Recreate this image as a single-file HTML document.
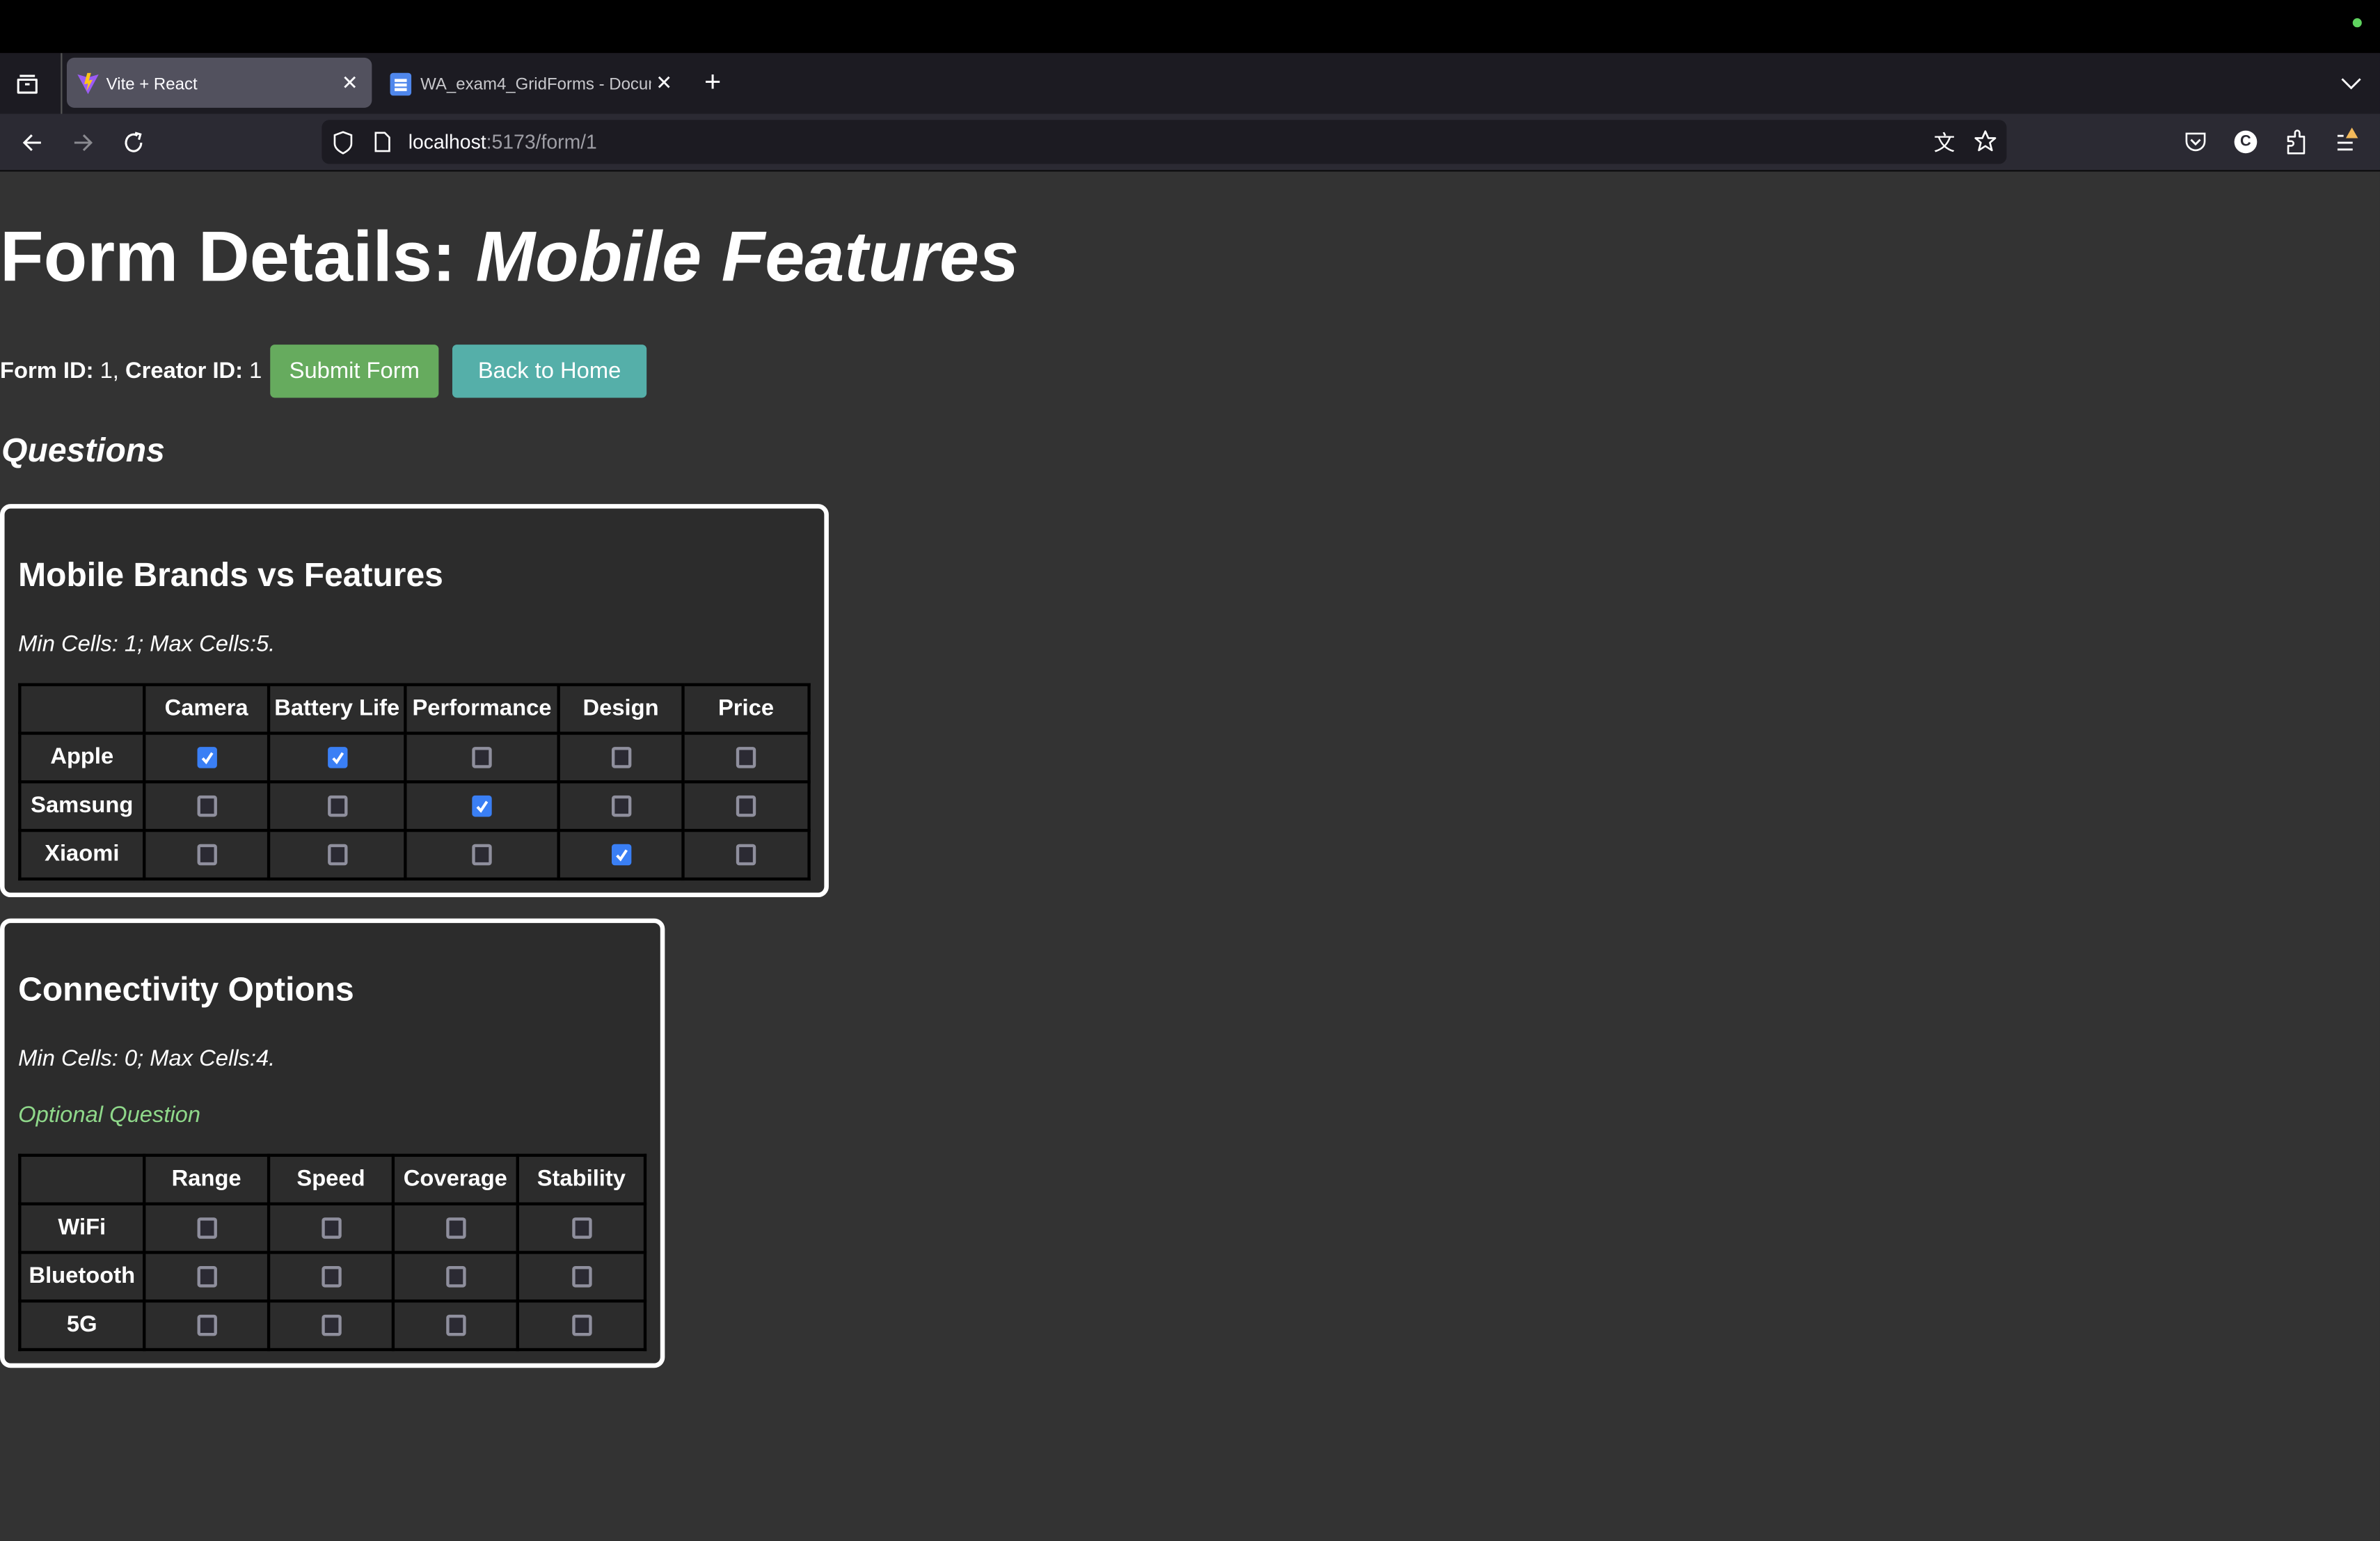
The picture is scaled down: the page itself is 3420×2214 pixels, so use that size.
<!DOCTYPE html>
<html><head><meta charset="utf-8">
<style>
html,body{margin:0;padding:0;width:3420px;height:2214px;overflow:hidden;background:#333;}
#w{position:absolute;left:0;top:0;width:1568px;height:1015px;transform:scale(2.18112);transform-origin:0 0;font-family:"Liberation Sans",Arial,sans-serif;color:#fff;background:#333;}
.a{position:absolute;}
.cb{display:inline-block;width:9px;height:10px;border:2px solid #8f8f9d;border-radius:2px;background:#2b2a33;vertical-align:middle;}
.ck{display:inline-block;width:13px;height:14px;border-radius:2px;background:#3a7ff5;vertical-align:middle;position:relative;}
.ck svg{position:absolute;left:0;top:0}
table{border-collapse:collapse;position:absolute;}
td,th{border:2px solid #000;font-weight:bold;font-size:15px;text-align:center;padding:0;height:30px;line-height:28px;}
.card{position:absolute;left:0;border:3px solid #fff;border-radius:7px;background:#2c2c2c;box-sizing:border-box;}
.card h2{position:absolute;left:9px;margin:0;font-size:22px;font-weight:bold;}
.card .m{position:absolute;left:9px;font-style:italic;font-size:15px;}
</style></head><body><div id="w">
<div class="a" style="left:0;top:0;width:1568px;height:35px;background:#000"></div>
<div class="a" style="left:1550px;top:12px;width:6px;height:6px;border-radius:3px;background:#5fd35f"></div>
<div class="a" style="left:0;top:35px;width:1568px;height:40px;background:#1c1b22"></div>
<div class="a" style="left:40px;top:35px;width:1px;height:40px;background:#555"></div>
<svg class="a" style="left:10px;top:47px" width="16" height="16" viewBox="0 0 16 16"><path d="M3 3h10M2 5.5h12v8.5H2z" fill="none" stroke="#fff" stroke-width="1.4" stroke-linejoin="round"/><path d="M6.5 8.5h3" stroke="#fff" stroke-width="1.4"/></svg>
<div class="a" style="left:44px;top:38px;width:201px;height:33px;background:#52515e;border-radius:5px"></div>
<svg class="a" style="left:51px;top:48px" width="14" height="14" viewBox="0 0 14 14"><path d="M0 1L7 14L14 1L7 3Z" fill="#9b5cf5"/><path d="M6.5 0L4.5 7.5L7 7L6 12L10 4.5L7.5 5L9 0Z" fill="#ffc517"/></svg>
<div class="a" style="left:70px;top:50px;font-size:11px;color:#fbfbfe">Vite + React</div>
<div class="a" style="left:225px;top:47px;font-size:13px;color:#fbfbfe">✕</div>
<div class="a" style="left:257px;top:48px;width:14px;height:15px;background:#4f87ec;border-radius:2px"></div>
<div class="a" style="left:260px;top:52px;width:8px;height:1.5px;background:#fff;box-shadow:0 3px 0 #fff,0 6px 0 #fff"></div>
<div class="a" style="left:277px;top:50px;font-size:11px;color:#c8c8cc;width:152px;overflow:hidden;white-space:nowrap">WA_exam4_GridForms - Document</div>
<div class="a" style="left:432px;top:47px;font-size:13px;color:#fbfbfe">✕</div>
<div class="a" style="left:464px;top:44px;font-size:19px;color:#fbfbfe;font-weight:300">+</div>
<svg class="a" style="left:1542px;top:50px" width="14" height="10" viewBox="0 0 14 10"><path d="M1 2L7 8L13 2" fill="none" stroke="#fff" stroke-width="1.3"/></svg>
<div class="a" style="left:0;top:75px;width:1568px;height:37px;background:#2b2a33"></div>
<div class="a" style="left:0;top:112px;width:1568px;height:1px;background:#0c0c0d"></div>
<svg class="a" style="left:13px;top:86px" width="16" height="16" viewBox="0 0 16 16"><path d="M14 8H3M8 3L3 8L8 13" fill="none" stroke="#fff" stroke-width="1.4"/></svg>
<svg class="a" style="left:47px;top:86px" width="16" height="16" viewBox="0 0 16 16"><path d="M2 8H13M8 3L13 8L8 13" fill="none" stroke="#8a8a90" stroke-width="1.4"/></svg>
<svg class="a" style="left:80px;top:86px" width="16" height="16" viewBox="0 0 16 16"><path d="M13 8A5 5.5 0 1 1 10.5 3.3" fill="none" stroke="#fff" stroke-width="1.4"/><path d="M9 1.5L12.5 2.5L11.5 6" fill="none" stroke="#fff" stroke-width="1.4"/></svg>
<div class="a" style="left:212px;top:79px;width:1110px;height:29px;background:#1c1b22;border-radius:5px"></div>
<svg class="a" style="left:219px;top:86px" width="14" height="16" viewBox="0 0 14 16"><path d="M7 1L12.5 3V8.5C12.5 11.5 10 13.5 7 15C4 13.5 1.5 11.5 1.5 8.5V3Z" fill="none" stroke="#fff" stroke-width="1.2"/></svg>
<svg class="a" style="left:246px;top:86px" width="12" height="15" viewBox="0 0 12 15"><path d="M1.5 1.5h6l3 3v9h-9z" fill="none" stroke="#fff" stroke-width="1.2"/></svg>
<div class="a" style="left:269px;top:86px;font-size:13px;color:#fbfbfe">localhost<span style="color:#9f9fa6">:5173/form/1</span></div>
<div class="a" style="left:1274px;top:84px;font-size:14px;color:#fff">文</div>
<svg class="a" style="left:1300px;top:85px" width="16" height="16" viewBox="0 0 16 16"><path d="M8 1.5L10 6H14.5L11 9L12.3 14L8 11.2L3.7 14L5 9L1.5 6H6Z" fill="none" stroke="#fff" stroke-width="1.2" stroke-linejoin="round"/></svg>
<svg class="a" style="left:1439px;top:86px" width="15" height="15" viewBox="0 0 15 15"><path d="M1.5 2h12v5a6 6 0 0 1-12 0z" fill="none" stroke="#fff" stroke-width="1.2"/><path d="M4.5 6L7.5 9L10.5 6" fill="none" stroke="#fff" stroke-width="1.3"/></svg>
<div class="a" style="left:1472px;top:86px;width:15px;height:15px;border-radius:8px;background:#fff;color:#2b2a33;font-size:10px;font-weight:bold;text-align:center;line-height:15px">C</div>
<svg class="a" style="left:1505px;top:85px" width="16" height="17" viewBox="0 0 16 17"><path d="M2.5 16V11H4.5A1.5 1.5 0 0 0 4.5 8H2.5V5H7V2.5A1.5 1.5 0 0 1 10 2.5V5H13V16Z" fill="none" stroke="#fff" stroke-width="1.2" stroke-linejoin="round"/></svg>
<svg class="a" style="left:1539px;top:84px" width="18" height="18" viewBox="0 0 18 18"><path d="M1 5.5h4M1 10h10M1 14.5h10" stroke="#fff" stroke-width="1.3"/><path d="M10.5 0L14.5 7H6.5Z" fill="#f3b95a"/></svg>
<div class="a" style="left:0;top:141px;font-size:47px;font-weight:bold;white-space:nowrap">Form Details: <i>Mobile Features</i></div>
<div class="a" style="left:0;top:236px;font-size:15px"><b>Form ID:</b> 1, <b>Creator ID:</b> 1</div>
<div class="a" style="left:178px;top:227px;width:111px;height:35px;background:#66ab5e;border-radius:3px;font-size:15px;text-align:center;line-height:35px">Submit Form</div>
<div class="a" style="left:298px;top:227px;width:128px;height:35px;background:#55afa9;border-radius:3px;font-size:15px;text-align:center;line-height:35px">Back to Home</div>
<div class="a" style="left:1px;top:284px;font-size:22px;font-weight:bold;font-style:italic">Questions</div>

<div class="card" style="top:332px;width:546px;height:259px">
 <h2 style="top:31px">Mobile Brands vs Features</h2>
 <div class="m" style="top:81px">Min Cells: 1; Max Cells:5.</div>
 <table style="left:9px;top:115px;width:522px">
  <tr><th style="width:80px"></th><th style="width:80px">Camera</th><th style="width:88px">Battery Life</th><th style="width:99px">Performance</th><th style="width:80px">Design</th><th>Price</th></tr>
  <tr><th>Apple</th><td><span class="ck"><svg width="13" height="14"><path d="M3.5 7.5L5.8 10L9.8 4" fill="none" stroke="#fff" stroke-width="1.8"/></svg></span></td><td><span class="ck"><svg width="13" height="14"><path d="M3.5 7.5L5.8 10L9.8 4" fill="none" stroke="#fff" stroke-width="1.8"/></svg></span></td><td><span class="cb"></span></td><td><span class="cb"></span></td><td><span class="cb"></span></td></tr>
  <tr><th>Samsung</th><td><span class="cb"></span></td><td><span class="cb"></span></td><td><span class="ck"><svg width="13" height="14"><path d="M3.5 7.5L5.8 10L9.8 4" fill="none" stroke="#fff" stroke-width="1.8"/></svg></span></td><td><span class="cb"></span></td><td><span class="cb"></span></td></tr>
  <tr><th>Xiaomi</th><td><span class="cb"></span></td><td><span class="cb"></span></td><td><span class="cb"></span></td><td><span class="ck"><svg width="13" height="14"><path d="M3.5 7.5L5.8 10L9.8 4" fill="none" stroke="#fff" stroke-width="1.8"/></svg></span></td><td><span class="cb"></span></td></tr>
 </table>
</div>

<div class="card" style="top:605px;width:438px;height:296px">
 <h2 style="top:31px">Connectivity Options</h2>
 <div class="m" style="top:81px">Min Cells: 0; Max Cells:4.</div>
 <div class="m" style="top:118px;color:#8fd88a">Optional Question</div>
 <table style="left:9px;top:152px;width:414px">
  <tr><th style="width:80px"></th><th style="width:80px">Range</th><th style="width:80px">Speed</th><th style="width:80px">Coverage</th><th>Stability</th></tr>
  <tr><th>WiFi</th><td><span class="cb"></span></td><td><span class="cb"></span></td><td><span class="cb"></span></td><td><span class="cb"></span></td></tr>
  <tr><th>Bluetooth</th><td><span class="cb"></span></td><td><span class="cb"></span></td><td><span class="cb"></span></td><td><span class="cb"></span></td></tr>
  <tr><th>5G</th><td><span class="cb"></span></td><td><span class="cb"></span></td><td><span class="cb"></span></td><td><span class="cb"></span></td></tr>
 </table>
</div>
</div></body></html>
